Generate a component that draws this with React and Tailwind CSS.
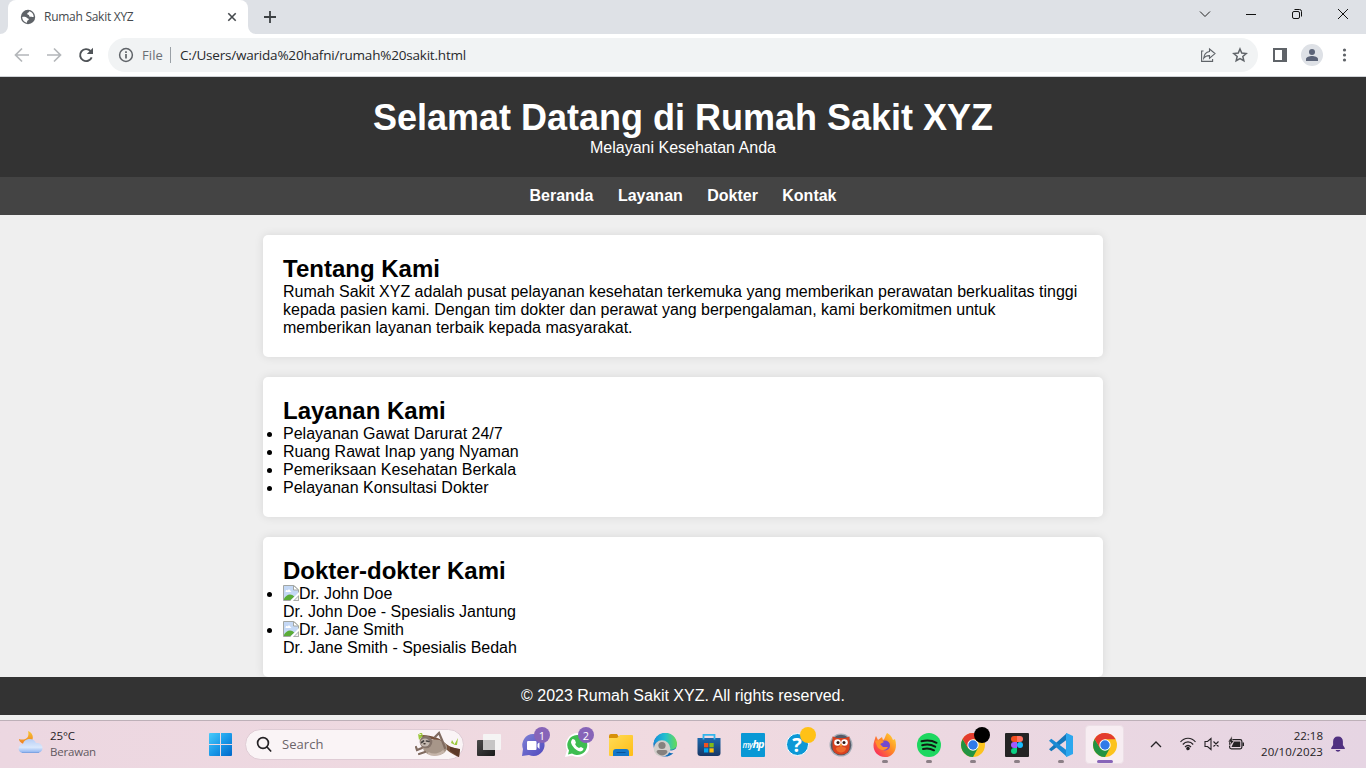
import React from "react";

const ui = "font-['Open_Sans','Noto_Sans',sans-serif]";

function Globe() {
  return (
    <svg width="16" height="16" viewBox="0 0 16 16" className="shrink-0">
      <circle cx="8" cy="8" r="7.200" fill="#5f6368" />
      <path d="M9.200 2.200c0 1.600-2 1.200-2 2.600 0 1.300 2 .6 2 2 0 1 1 1.200 1.800.9.900-.3 1.200.6 2.700.3C13.700 4.900 12 2.600 9.200 2.200zM2.200 8c1.700-.3 3.800-.2 4.600.7.700.8 2 .5 2 1.600 0 1.200-1.500 1-1.700 2.100-.1.500-.1.900-.1 1.300C4.300 13.300 2.200 11 2.200 8z" fill="#fff" />
    </svg>
  );
}

function Broken() {
  return (
    <svg width="16" height="16" viewBox="0 0 16 16" className="inline-block align-[-2px]">
      <path d="M.5.5H11l4.500 4.500v10.500H.5z" fill="#c4d8f5" stroke="#a3a7a3" />
      <path d="M2.500 6.500c0-1.500 1.500-2 2-1 .7-1.500 3-1 2.800.5 1.200 0 1.200 1 .7 1H2.700z" fill="#fff" />
      <path d="M1 15v-1.500C2.500 11.500 4.500 9.500 7 9.500c1.800 0 3 .8 4.300 2.200L7.500 15z" fill="#5aac37" />
      <path d="M10.500.5V5h5z" fill="#fff" stroke="#a3a7a3" />
      <path d="M16 7v3l-6 6H7.200L16 7z" fill="#fff" />
      <path d="M11 15.500h4.500V11z" fill="#f3f3f3" stroke="#a3a7a3" strokeWidth=".8" />
    </svg>
  );
}

function Chrome() {
  return (
    <svg width="24" height="24" viewBox="0 0 24 24">
      <circle cx="12" cy="12" r="12" fill="#fcc31e" />
      <path d="M7.060 14.850L1.610 6A12 12 0 0 0 12 24l5-9z" fill="#229342" />
      <path d="M12 6.300h10.500A12 12 0 0 0 1.610 6L7 15z" fill="#e33b2e" />
      <circle cx="12" cy="12" r="5.700" fill="#fff" />
      <circle cx="12" cy="12" r="4.700" fill="#2f7ae8" />
    </svg>
  );
}

function Slot({ children, run, active, badge, dot }) {
  return (
    <div className="relative flex h-full w-11 shrink-0 items-center justify-center">
      {active && <div className="absolute top-[4px] left-[2px] h-[39px] w-[39px] rounded-[4px] border border-[#ecdfe6] bg-[#f7edf2]" />}
      <div className="relative flex h-6 w-6 items-center justify-center">{children}</div>
      {badge && <div className={`absolute top-[6px] left-[23px] flex h-4 w-4 items-center justify-center rounded-full bg-[#8764b8] text-[11px] leading-none text-white ${ui}`}>{badge}</div>}
      {dot && <div className={dot} />}
      {run && <div className="absolute top-[39px] left-[19px] h-[3px] w-[6px] rounded-full bg-[#8b7f86]" />}
      {active && <div className="absolute top-[39px] left-[14px] h-[3px] w-4 rounded-full bg-[#8764b8]" />}
    </div>
  );
}

function Browser() {
  return (
    <div className={ui}>
      <div className="flex h-[34px] bg-[#dee1e6]">
        <div className="relative ml-2 flex h-[34px] w-[240px] items-center rounded-t-[8px] bg-white pl-3">
          <svg className="absolute bottom-0 -left-2" width="8" height="8"><path d="M8 0v8H0a8 8 0 0 0 8-8z" fill="#fff" /></svg>
          <svg className="absolute -right-2 bottom-0" width="8" height="8"><path d="M0 0v8h8a8 8 0 0 1-8-8z" fill="#fff" /></svg>
          <Globe />
          <span className="ml-2 w-[180px] text-[12px] leading-4 tracking-[-0.27px] text-[#45494d]">Rumah Sakit XYZ</span>
          <svg width="16" height="16" viewBox="0 0 16 16"><path d="M4.300 4.300l7.400 7.400m0-7.400l-7.400 7.400" stroke="#45494d" strokeWidth="1.600" /></svg>
        </div>
        <svg className="mt-[9px] ml-[14px]" width="16" height="16" viewBox="0 0 16 16"><path d="M8 2v12M2 8h12" stroke="#3c4043" strokeWidth="1.800" /></svg>
        <div className="mt-[6px] ml-auto flex gap-[30px] pr-[15px]">
          <svg width="16" height="16" viewBox="0 0 16 16" fill="none" stroke="#222"><path d="M3 5.500l5 5 5-5" /></svg>
          <svg width="16" height="16" viewBox="0 0 16 16" stroke="#111"><path d="M3 8.500h10" /></svg>
          <svg width="16" height="16" viewBox="0 0 16 16" fill="none" stroke="#111"><rect x="3.500" y="5.500" width="7" height="7" rx="1.500" /><path d="M5.500 3.500h5a2 2 0 0 1 2 2v5" /></svg>
          <svg width="16" height="16" viewBox="0 0 16 16" stroke="#111"><path d="M3 3l10 10M13 3L3 13" /></svg>
        </div>
      </div>
      <div className="flex h-[43px] items-center border-b border-[#d0d3d7] bg-white pr-[14px] pl-[14px]">
        <svg width="16" height="16" viewBox="0 0 16 16" fill="none" stroke="#b4b7ba" strokeWidth="1.700"><path d="M15 8H2M8 1.500L1.500 8 8 14.500" /></svg>
        <svg className="ml-4" width="16" height="16" viewBox="0 0 16 16" fill="none" stroke="#b4b7ba" strokeWidth="1.700"><path d="M1 8h13M8 1.500L14.500 8 8 14.500" /></svg>
        <svg className="ml-4" width="16" height="16" viewBox="0 0 16 16" fill="none"><path d="M13.700 10.300A6 6 0 1 1 12.500 4" stroke="#4f5357" strokeWidth="1.900" /><path d="M15 .8v6.200H8.800z" fill="#4f5357" /></svg>
        <div className="ml-[14px] flex h-[34px] w-[1150px] items-center rounded-full bg-[#f1f3f4] pl-[10px]">
          <svg width="16" height="16" viewBox="0 0 16 16" fill="none"><circle cx="8" cy="8" r="6.400" stroke="#5f6368" strokeWidth="1.500" /><path d="M8 7v4.500M8 4.300V6" stroke="#5f6368" strokeWidth="1.700" /></svg>
          <span className="ml-2 w-[28px] text-[13px] leading-4 tracking-[0.1px] text-[#6b6f74]">File</span>
          <div className="h-4 w-px bg-[#9aa0a6]" />
          <span className="ml-[9px] w-[1020px] text-[13.500px] leading-4 tracking-[-0.2px] whitespace-nowrap text-[#27292c]">C:/Users/warida%20hafni/rumah%20sakit.html</span>
          <svg width="16" height="16" viewBox="0 0 16 16" fill="none" stroke="#5f6368" strokeWidth="1.100"><path d="M3.500 4H1.600v10.400h11V12M9.500 2L15 6.600l-5.500 4.600V8.600C7 8.500 5 9.400 3.700 11.300 4 8 6 5 9.500 4.500z" /></svg>
          <svg className="ml-4" width="16" height="16" viewBox="0 0 16 16" fill="none" stroke="#5f6368" strokeWidth="1.500"><path d="M8 2l1.750 4.100 4.450.38-3.370 2.940 1 4.350L8 11.500l-3.830 2.270 1-4.350L1.800 6.480l4.450-.38z" /></svg>
        </div>
        <svg className="ml-[14px]" width="16" height="16" viewBox="0 0 16 16"><path d="M1 1h14v14H1zM3 3v10h7V3z" fill="#5f6368" fillRule="evenodd" /></svg>
        <svg className="ml-[13px]" width="22" height="22" viewBox="0 0 22 22"><circle cx="11" cy="11" r="11" fill="#dee1e6" /><circle cx="11" cy="8" r="3" fill="#5b6377" /><path d="M5 17v-1.800C5 12.800 8.500 12 11 12s6 .8 6 3.200V17z" fill="#5b6377" /></svg>
        <svg className="ml-[13px]" width="16" height="16" viewBox="0 0 16 16" fill="#5f6368"><circle cx="8.500" cy="3" r="1.600" /><circle cx="8.500" cy="8" r="1.600" /><circle cx="8.500" cy="13" r="1.600" /></svg>
      </div>
    </div>
  );
}

const card = "rounded-[5px] bg-white p-5 shadow-[0_0_10px_rgba(0,0,0,0.1)]";
const h2 = "text-[24px] leading-7 font-bold";

function Page() {
  return (
    <div className="flex h-[643px] flex-col overflow-hidden bg-[#efefef] font-['Liberation_Sans',Arial,sans-serif] text-[16px] leading-[18px] text-black">
      <header className="h-[100px] shrink-0 bg-[#333] pt-5 text-center text-white">
        <h1 className="text-[36px] leading-[42px] font-bold">Selamat Datang di Rumah Sakit XYZ</h1>
        <p>Melayani Kesehatan Anda</p>
      </header>
      <nav className="flex h-[38px] shrink-0 items-center justify-center gap-[24.400px] bg-[#444] font-bold text-white">
        <a>Beranda</a><a>Layanan</a><a>Dokter</a><a>Kontak</a>
      </nav>
      <main className="mx-auto flex w-[840px] flex-col gap-5 pt-5">
        <section className={card}>
          <h2 className={h2}>Tentang Kami</h2>
          <p>Rumah Sakit XYZ adalah pusat pelayanan kesehatan terkemuka yang memberikan perawatan berkualitas tinggi kepada pasien kami. Dengan tim dokter dan perawat yang berpengalaman, kami berkomitmen untuk memberikan layanan terbaik kepada masyarakat.</p>
        </section>
        <section className={card}>
          <h2 className={h2}>Layanan Kami</h2>
          <ul className="list-disc">
            <li>Pelayanan Gawat Darurat 24/7</li>
            <li>Ruang Rawat Inap yang Nyaman</li>
            <li>Pemeriksaan Kesehatan Berkala</li>
            <li>Pelayanan Konsultasi Dokter</li>
          </ul>
        </section>
        <section className={card}>
          <h2 className={h2}>Dokter-dokter Kami</h2>
          <ul className="list-disc">
            <li className="h-9"><Broken />Dr. John Doe<br />Dr. John Doe - Spesialis Jantung</li>
            <li className="h-9"><Broken />Dr. Jane Smith<br />Dr. Jane Smith - Spesialis Bedah</li>
          </ul>
        </section>
      </main>
      <footer className="relative h-[38px] shrink-0 bg-[#333] pt-[10px] text-center text-white">© 2023 Rumah Sakit XYZ. All rights reserved.</footer>
    </div>
  );
}

function Sloth() {
  return (
    <svg width="48" height="28" viewBox="0 0 48 28">
      <path d="M5 4C14 4 24 5 31 12c5 4 11 6 15 6l-1 8c-5-2-12-6-16-11C22 8 13 6 5 6z" fill="#75503b" />
      <path d="M36 16l10 2-1 8-9-6z" fill="#5c3928" />
      <path d="M4 3l1 6 4-4zM5 2l4 3-1-3zM41 14l-3-5-1 3zM40 14l4-7-1 7z" fill="#9cc93c" />
      <ellipse cx="21" cy="16.500" rx="12" ry="8" fill="#a79689" />
      <path d="M21 6l4-4 3 7 3 8M8 17l-5 2-1-3M11 21l-6 2" fill="none" stroke="#806b60" strokeWidth="2.200" strokeLinecap="round" />
      <path d="M14 22c5 3 12 2 16-2" stroke="#c6b5aa" strokeWidth="2.500" fill="none" />
      <circle cx="12" cy="11" r="6.300" fill="#84736a" />
      <ellipse cx="11" cy="11.500" rx="4.700" ry="4" fill="#c3b8b0" />
      <path d="M7.500 11.500l2-1.500M12.500 10l2.500.5" stroke="#44403f" strokeWidth="1.700" strokeLinecap="round" />
      <ellipse cx="10.500" cy="12.700" rx="1.300" ry=".8" fill="#3c302b" />
    </svg>
  );
}

function Taskbar() {
  return (
    <div className={`flex h-12 border-t border-[#bdb0b8] bg-linear-to-r from-[#ecd7e1] via-[#f0dae0] to-[#e6d5e3] ${ui}`}>
      <div className="flex w-[198px] shrink-0 pt-[7px] pl-[18px]">
        <svg width="26" height="26" viewBox="0 0 26 26">
          <defs><linearGradient id="cloud" x2="0" y2="1"><stop stopColor="#b7cef5" /><stop offset=".6" stopColor="#dae8fc" /><stop offset="1" stopColor="#85aef0" /></linearGradient><linearGradient id="moon" x2="0" y2="1"><stop stopColor="#f8c530" /><stop offset="1" stopColor="#ed7d22" /></linearGradient></defs>
          <path d="M10 3c6 2 7 10 0 13-5 1-9-2-9-5 6 2 11-1 9-8z" fill="url(#moon)" />
          <path d="M6 25c-7 0-7-8-1-9 1-6 11-7 13-1 8-1 9 10 1 10z" fill="url(#cloud)" />
          <path d="M4 24.500h17" stroke="#7ea4e2" strokeWidth="1" fill="none" />
        </svg>
        <div className="ml-[6px] text-[11.500px] leading-4"><div className="tracking-[-0.1px] text-[#1f1b1e]">25°C</div><div className="tracking-[-0.2px] text-[#625960]">Berawan</div></div>
      </div>
      <Slot><svg width="23" height="23" viewBox="0 0 23 23"><defs><linearGradient id="win" x2="1" y2="1"><stop stopColor="#48cbfa" /><stop offset=".5" stopColor="#1b9ae9" /><stop offset="1" stopColor="#0067c9" /></linearGradient></defs><path d="M1 0h10v11H0V1q0-1 1-1zM12 0h10q1 0 1 1v10H12zM0 12h11v11H1q-1 0-1-1zM12 12h11v10q0 1-1 1H12z" fill="url(#win)" /></svg></Slot>
      <div className="mt-[8px] ml-[3px] flex h-[31px] w-[219px] shrink-0 items-center rounded-full border border-[#dfccd5] bg-[#faf4f6] pl-[10px]">
        <svg width="17" height="17" viewBox="0 0 17 17" fill="none" stroke="#252225" strokeWidth="1.700" strokeLinecap="round"><circle cx="7" cy="7" r="5.400" /><path d="M11 11l3.700 4" /></svg>
        <span className="ml-[9px] w-[132px] text-[13px] tracking-[0.05px] text-[#6b6469]">Search</span>
        <Sloth />
      </div>
      <div className="ml-[3px] flex">
        <Slot><svg width="24" height="24" viewBox="0 0 24 24"><defs><linearGradient id="dark" x2="1" y2="1"><stop stopColor="#4b4b4b" /><stop offset="1" stopColor="#191919" /></linearGradient></defs><rect y="7" width="18" height="16" rx="1" fill="url(#dark)" /><rect x="6" y="1" width="18" height="16" rx="1" fill="#f5f4f4" /><path d="M6 7h12v10H6z" fill="#c6c5c5" /></svg></Slot>
        <Slot badge="1"><svg width="24" height="24" viewBox="0 0 24 24"><defs><linearGradient id="chat" x2="1" y2="1"><stop stopColor="#7e82d5" /><stop offset="1" stopColor="#5048be" /></linearGradient></defs><path d="M12 1a11 11 0 1 1-4 21l-7 1 1-7A11 11 0 0 1 12 1z" fill="url(#chat)" /><rect x="6" y="8" width="9.500" height="9" rx="1" fill="#fff" /><path d="M16.500 11l2-2v7l-2-2z" fill="#fff" /></svg></Slot>
        <Slot badge="2"><svg width="24" height="24" viewBox="0 0 24 24"><path d="M12 0a12 12 0 1 1-5 22.500L0 24l2-7A12 12 0 0 1 12 0z" fill="#fff" /><path d="M12 2a10 10 0 1 1-5 18.500L3 21.500l1-4A10 10 0 0 1 12 2z" fill="#3ebd50" /><path d="M8 6l2 1 1 3-1 1c1 2 2 3 4 4l2-1 2.500 1.500c0 2-2 3-3.500 3-4-1-8-5-9-9C6 8 7 6 8 6z" fill="#fff" /></svg></Slot>
        <Slot><svg width="24" height="24" viewBox="0 0 24 24"><path d="M0 3q0-2 2-2h6l2 3v4H0z" fill="#d79009" /><defs><linearGradient id="folder" x2="1" y2="1"><stop stopColor="#ffdc57" /><stop offset="1" stopColor="#ffbd16" /></linearGradient></defs><path d="M0 5h8l3-3h12q1 0 1 1v19q0 1-1 1H1q-1 0-1-1z" fill="url(#folder)" /><path d="M4 23v-4q0-3 3-3h10q3 0 3 3v4z" fill="#1477c9" /><path d="M7.500 19.500h9" stroke="#095298" /></svg></Slot>
        <Slot><svg width="24" height="24" viewBox="0 0 24 24"><defs><linearGradient id="edge" x2="1"><stop stopColor="#168eda" /><stop offset=".5" stopColor="#23bfce" /><stop offset="1" stopColor="#68db54" /></linearGradient></defs><circle cx="12" cy="12" r="11.500" fill="#1470ba" /><path d="M.5 12A11.700 11.700 0 0 1 24 11c0 6-8 7-10 5 3-3 0-8-5-8-4 0-7 1-8.500 4z" fill="url(#edge)" /><path d="M15 16.500c3 2 6 1 9-2L22.500 19c-2 2-7 2-7.500-2.500z" fill="#eedbe2" /><circle cx="9" cy="15.500" r="8.300" fill="#d2cecb" /><circle cx="9" cy="12.500" r="3.600" fill="#85817e" /><path d="M3.500 19q0-2 2-2h7q2 0 2 2c-2 4-8 5-11 0z" fill="#85817e" /></svg></Slot>
        <Slot><svg width="24" height="24" viewBox="0 0 24 24"><defs><linearGradient id="store" x2="0" y2="1"><stop stopColor="#1c69ae" /><stop offset="1" stopColor="#183765" /></linearGradient></defs><path d="M.5 5h23v15q0 3-3 3h-17q-3 0-3-3z" fill="url(#store)" /><path d="M6.500 6.500V1.800h11v4.700" fill="none" stroke="#32b5ec" strokeWidth="1.800" /><path d="M7 10h4.300v4.300H7z" fill="#f15221" /><path d="M12.400 10h4.300v4.300h-4.300z" fill="#80bb18" /><path d="M7 15.300h4.300v4.200H7z" fill="#00a4ef" /><path d="M12.400 15.300h4.300v4.200h-4.300z" fill="#ffbb0a" /></svg></Slot>
        <Slot><div className="flex h-6 w-6 items-center justify-center rounded-[1px] bg-[#0998d5] text-white italic"><span className="text-[8px] font-semibold tracking-[-0.5px]">my</span><span className="text-[11px] font-bold tracking-[-1px]">hp</span></div></Slot>
        <Slot dot="absolute left-[25px] top-[6px] h-4 w-4 rounded-full bg-[#ffc116]"><div className="flex h-[23px] w-[23px] items-center justify-center rounded-full border border-white bg-[#0c98d6] text-[20px] font-bold text-white">?</div></Slot>
        <Slot><svg width="24" height="24" viewBox="0 0 24 24"><circle cx="12" cy="12" r="11.500" fill="#a7aeb8" /><circle cx="12" cy="12" r="10.300" fill="#535967" /><path d="M3.500 3.500L8 5h8l4.500-1.500V14c0 10-17 10-17 0z" fill="#d9411f" /><path d="M7 15c3-2 7-2 10 0 0 6-10 6-10 0z" fill="#ee6a2c" /><circle cx="8.500" cy="9.500" r="3.300" fill="#fff" /><circle cx="15.500" cy="9.500" r="3.300" fill="#fff" /><circle cx="9" cy="9.500" r="1.500" fill="#2d1714" /><circle cx="15" cy="9.500" r="1.500" fill="#2d1714" /><path d="M10.800 11.500h2.400L12 14z" fill="#f8b832" /></svg></Slot>
        <Slot run><svg width="24" height="24" viewBox="0 0 24 24"><defs><linearGradient id="fox" x1="1" x2="0" y2="1"><stop stopColor="#ffe138" /><stop offset=".45" stopColor="#ff8a24" /><stop offset="1" stopColor="#f8156b" /></linearGradient></defs><path d="M14 0c5 3 5 5 6 7l2-1c3 9-1 18-10 18S-1 16 1 9c1-3 1-4 2-6l2 4 4-3 1 3c2-1 2-4 4-7z" fill="url(#fox)" /><circle cx="12" cy="12.500" r="5" fill="#7448ce" /><path d="M2 8c4-2 7-1 9 1l-4 2 3 3h5c-2 5-10 3-11-1z" fill="#ff912b" /></svg></Slot>
        <Slot run><svg width="24" height="24" viewBox="0 0 24 24"><circle cx="12" cy="12" r="12" fill="#1ed760" /><path d="M4.500 8.300c5-1.400 10.500-1 15 1.500M5.200 12.300c4.500-1.300 9-.8 13 1.400M6 16c4-1 7.500-.6 11 1.300" fill="none" stroke="#101b13" strokeWidth="2" strokeLinecap="round" /></svg></Slot>
        <Slot run dot="absolute left-[23px] top-[6px] h-4 w-4 rounded-full bg-black"><Chrome /></Slot>
        <Slot run><svg width="24" height="24" viewBox="0 0 24 24"><rect width="24" height="24" rx="1" fill="#242424" /><path d="M12 3H9a3 3 0 0 0 0 6h3z" fill="#f24e1e" /><path d="M12 3h3a3 3 0 0 1 0 6h-3z" fill="#ff7262" /><path d="M12 9H9a3 3 0 0 0 0 6h3z" fill="#a259ff" /><circle cx="15" cy="12" r="3" fill="#1abcfe" /><path d="M12 15H9a3 3 0 1 0 3 3z" fill="#0acf83" /></svg></Slot>
        <Slot run><svg width="24" height="24" viewBox="0 0 24 24"><path d="M0 16.200L18 0v6.500L2.300 18.300z" fill="#1477ba" /><path d="M0 7.800l2.300-2.100L18 17.500V24z" fill="#198ad3" /><path d="M17.500 0L24 3v18l-6.500 3-.5-1V1z" fill="#2ca7ee" /></svg></Slot>
        <Slot active><Chrome /></Slot>
      </div>
      <div className="ml-[21px] flex flex-1 pt-[15px]">
        <svg width="16" height="16" viewBox="0 0 16 16" fill="none" stroke="#252225" strokeWidth="1.300"><path d="M3 11l5-5 5 5" /></svg>
        <svg className="ml-4" width="16" height="16" viewBox="0 0 16 16" fill="none" stroke="#252225" strokeWidth="1.200"><path d="M.5 6c4-5 11-5 15 0M2.800 8.500c3-3.500 7.400-3.500 10.400 0M5 11c2-2 4-2 6 0" /><circle cx="8" cy="12.500" r="1.200" fill="#252225" /></svg>
        <svg className="ml-2" width="16" height="16" viewBox="0 0 16 16" fill="none" stroke="#252225" strokeWidth="1.100"><path d="M1 5.500h2.500L7 2.500v11L3.500 10.500H1zM9.500 5.500l5 5m0-5l-5 5" /></svg>
        <svg className="ml-2" width="17" height="16" viewBox="0 0 17 16"><rect x="1.600" y="3.600" width="12.300" height="9.300" rx="1.800" fill="none" stroke="#252225" strokeWidth="1.200" /><path d="M6 5.500h6.300v5.500H3.500zM14.500 6.500H16v3.500h-1.500z" fill="#252225" /><path d="M4 0L0 6h2.600L1.500 10l5-5.500H4.200z" fill="#252225" stroke="#ecdae3" strokeWidth=".5" /></svg>
        <div className="-mt-[8px] ml-[12px] w-[66px] text-right text-[11.500px] leading-4 whitespace-nowrap text-[#252225]"><div className="tracking-[0px]">22:18</div><div className="tracking-[0.1px]">20/10/2023</div></div>
        <svg className="ml-[7px]" width="16" height="17" viewBox="0 0 16 17" fill="#503080"><path d="M8 .5c3.300 0 4.900 2 4.900 5v3.500l1.900 3v1H1.200v-1l1.900-3V5.500c0-3 1.600-5 4.900-5zM5.600 14h4.800C9.700 16.200 6.300 16.200 5.600 14z" /></svg>
      </div>
    </div>
  );
}

export default function App() {
  return (
    <div className="h-[768px] w-[1366px] overflow-hidden">
      <Browser />
      <Page />
      <Taskbar />
    </div>
  );
}
